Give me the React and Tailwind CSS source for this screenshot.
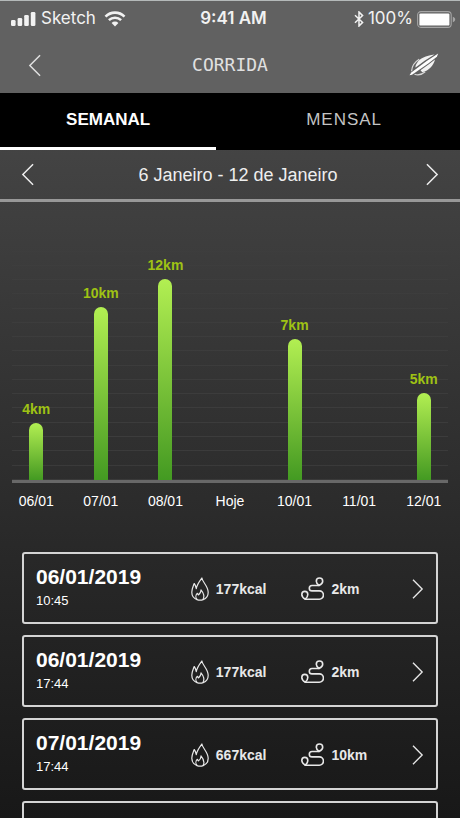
// src/App.jsx
import React from "react";

const days = [
  { label: "06/01", km: 4, height: 57 },
  { label: "07/01", km: 10, height: 173 },
  { label: "08/01", km: 12, height: 201 },
  { label: "Hoje", km: 0, height: 0 },
  { label: "10/01", km: 7, height: 141 },
  { label: "11/01", km: 0, height: 0 },
  { label: "12/01", km: 5, height: 87 },
];

const runs = [
  { id: 1, date: "06/01/2019", time: "10:45", kcal: 177, km: 2 },
  { id: 2, date: "06/01/2019", time: "17:44", kcal: 177, km: 2 },
  { id: 3, date: "07/01/2019", time: "17:44", kcal: 667, km: 10 },
];

// grid lines get fainter towards the top of the chart
const gridLines = Array.from({ length: 19 }, (_, i) => Math.min(0.06, i * 0.004));

const Chevron = ({ direction = "right", className }) => (
  <svg viewBox="0 0 14 24" fill="none" stroke="currentColor" className={className} aria-hidden="true">
    <path d={direction === "left" ? "M13 1 2 12l11 11" : "M1 1l11 11L1 23"} strokeWidth="1.6" />
  </svg>
);

const SignalIcon = () => (
  <svg viewBox="0 0 26 16" fill="currentColor" className="h-4 w-[26px]" aria-hidden="true">
    <rect x="0" y="9" width="4.6" height="6" rx="1.3" />
    <rect x="6.6" y="7" width="4.6" height="8" rx="1.3" />
    <rect x="13.2" y="4" width="4.6" height="11" rx="1.3" />
    <rect x="19.8" y="1" width="4.6" height="14" rx="1.3" />
  </svg>
);

const WifiIcon = () => (
  <svg viewBox="0 0 22 16" fill="none" stroke="currentColor" className="h-4 w-[22px]" aria-hidden="true">
    <path d="M1.5 5.6a13.4 13.4 0 0 1 19 0" strokeWidth="2.6" />
    <path d="M4.9 9.2a8.6 8.6 0 0 1 12.2 0" strokeWidth="2.5" />
    <path d="M11 15.6 7.6 12a4.8 4.8 0 0 1 6.8 0z" fill="currentColor" stroke="none" />
  </svg>
);

const BluetoothIcon = () => (
  <svg viewBox="0 0 10 16" fill="none" stroke="currentColor" className="h-4 w-2.5" aria-hidden="true">
    <path d="M1 4.2 8.6 11.4 5 15V1l3.6 3.6L1 11.8" strokeWidth="1.5" />
  </svg>
);

const BatteryIcon = () => (
  <svg viewBox="0 0 39 17" fill="none" className="h-[17px] w-[39px]" aria-hidden="true">
    <rect x="0.6" y="0.6" width="33.6" height="15.8" rx="3.4" stroke="#a5a5a5" strokeWidth="1.1" />
    <rect x="2.4" y="2.4" width="30" height="12.2" rx="1.2" fill="#fff" />
    <path d="M35.8 5.8c1.6.6 2.4 1.5 2.4 2.7s-.8 2.1-2.4 2.7z" fill="#a5a5a5" />
  </svg>
);

const LogoIcon = () => (
  <svg viewBox="0 0 30 24" fill="none" className="h-6 w-[30px]" aria-hidden="true">
    <path d="M.5 22.3 2.3 19.6 17.7 8 29.2.4 27.9 3.7 19.3 10.4 3 21.7z" fill="#fff" />
    <path d="M8 9.9C11 5.6 16.5 2.7 25.5 1.6L16 7.6 6.5 14.5c-.2-1.5.4-3 1.5-4.6z" fill="#f2f2f2" />
    <path d="M2.6 18.2C2.8 13.2 5.5 9.2 10.2 6.3" stroke="#d8d8d8" strokeWidth="1.2" />
    <path d="M11.5 17.3 19.5 11.6 26 6.4C24.6 12.6 20 17.4 13.3 19.2z" fill="#f2f2f2" />
    <path d="M5.5 21.3c3.3 1.2 7.3.5 10.7-2.5" stroke="#d8d8d8" strokeWidth="1.2" />
  </svg>
);

const FlameIcon = () => (
  <svg
    viewBox="0 0 18 24"
    fill="none"
    stroke="currentColor"
    strokeWidth="1.2"
    strokeLinejoin="round"
    className="h-6 w-[18px] shrink-0"
    aria-hidden="true"
  >
    <path d="M6 22.6C2.8 21.4.8 18.8.8 15.3c0-3.2 1.2-5.7 2.400-8.800 1 1.200 1.700 3 2.100 5.200C5.700 7.900 8.200 4.600 10.900 1c.2 3.7 6.300 8.200 6.300 14.200 0 3.700-2 6.300-5 7.400-2 .7-4.300.7-6.200 0z" />
    <path d="M6 22.5c-1.600-1.900-1.400-4.600.4-6.200.4.5.7 1 .9 1.600 1.900-1.300 2.800-2.800 2.700-5 1.900 2.300 3.900 6.600 2 9.600" />
  </svg>
);

const RouteIcon = () => (
  <svg
    viewBox="0 0 23 24"
    fill="none"
    stroke="currentColor"
    strokeWidth="1.6"
    strokeLinecap="round"
    strokeLinejoin="round"
    className="h-6 w-[23px] shrink-0"
    aria-hidden="true"
  >
    <path d="M18 8.400c-1.700-1.300-2.700-2.600-2.700-4.200a3.200 3.200 0 1 1 6.400 0c0 1.800-1.500 3.200-3.700 4.200z" />
    <path d="M4.200 22.200c-2-1.400-3.400-2.900-3.400-4.800a3 3 0 0 1 6 0c0 1.800-.8 3.200-2.600 4.800z" />
    <path d="M18 8.500h-7a2.700 2.700 0 0 0 0 5.400h7.300a4.100 4.100 0 0 1 0 8.300H4.200" />
  </svg>
);

const StatusBar = () => (
  <div className="grid h-9 grid-cols-[1fr_auto_1fr] items-center pr-1 pl-[11px] font-['Inter',sans-serif] text-[17px] text-[#f2f2f2]">
    <div className="flex items-center gap-1">
      <SignalIcon />
      <span>Sketch</span>
      <span className="pl-1">
        <WifiIcon />
      </span>
    </div>
    <span className="font-semibold">9:41 AM</span>
    <div className="flex items-center justify-end gap-1">
      <BluetoothIcon />
      <span>100%</span>
      <BatteryIcon />
    </div>
  </div>
);

const BarChart = () => (
  <section aria-label="Distância por dia" className="text-sm">
    <div className="relative">
      <div className="absolute inset-x-3 top-5 bottom-0 flex flex-col justify-between">
        {gridLines.map((opacity, i) => (
          <div key={i} className="h-px bg-white" style={{ opacity }} />
        ))}
      </div>
      <div className="relative grid h-[278px] grid-cols-7 items-end px-1">
        {days.map((day) => (
          <div key={day.label} className="flex flex-col items-center">
            {day.km > 0 && (
              <>
                <span className="mb-1.5 leading-4 font-bold text-[#9fc214]">{day.km}km</span>
                <div
                  className="w-3.5 rounded-t-full bg-linear-to-b from-[#b2ef52] to-[#439a22]"
                  style={{ height: day.height }}
                />
              </>
            )}
          </div>
        ))}
      </div>
    </div>
    <div className="mx-3 h-[3px] bg-[#686868]" />
    <div className="grid grid-cols-7 px-1 pt-2 text-center leading-5 text-white">
      {days.map((day) => (
        <span key={day.label}>{day.label}</span>
      ))}
    </div>
  </section>
);

const cardClass = "h-18 w-full rounded-[3px] border-2 border-[#d4d4d4]";

const RunCard = ({ run }) => (
  <li>
    <button
      type="button"
      className={`${cardClass} grid grid-cols-[7fr_5fr_5fr_auto] items-center px-3 pt-0.5 text-left text-[#e8e8e8]`}
    >
      <div className="text-white">
        <div className="text-[21px] leading-6 font-bold">{run.date}</div>
        <div className="text-[13px] leading-6">{run.time}</div>
      </div>
      <div className="flex items-center gap-[7px] text-sm font-bold">
        <FlameIcon />
        {run.kcal}kcal
      </div>
      <div className="flex items-center gap-[7px] text-sm font-bold">
        <RouteIcon />
        {run.km}km
      </div>
      <Chevron className="h-5 w-3" />
    </button>
  </li>
);

const App = () => {
  return (
    <div className="flex h-screen flex-col overflow-hidden bg-linear-to-b from-[#4e4e4e] to-[#181818] font-['Liberation_Sans',Arial,sans-serif]">
      <header className="shrink-0 border-t border-[#b4b9b9] bg-[#616161]">
        <StatusBar />
        <div className="grid h-14 grid-cols-[1fr_auto_1fr] items-center px-[21px]">
          <button type="button" aria-label="Voltar" className="justify-self-start pl-[7px] text-[#e0e0e0]">
            <Chevron direction="left" className="h-[23px] w-[13px]" />
          </button>
          <h1 className="font-['DejaVu_Sans_Mono',monospace] text-lg text-[#e0e0e0]">CORRIDA</h1>
          <div className="justify-self-end">
            <LogoIcon />
          </div>
        </div>
      </header>

      <nav className="flex h-[57px] shrink-0 gap-3 bg-black text-[17px]">
        <button type="button" className="w-[47%] border-b-3 border-white font-bold text-white">
          SEMANAL
        </button>
        <button type="button" className="flex-1 border-b-3 border-transparent tracking-[1px] text-[#c4c4c4]">
          MENSAL
        </button>
      </nav>

      <div className="flex h-[52px] shrink-0 items-center justify-between border-b-3 border-[#989898] px-[21px] text-[#eeeeee]">
        <button type="button" aria-label="Semana anterior">
          <Chevron direction="left" className="h-[23px] w-[13px]" />
        </button>
        <span className="pl-4 text-lg">6 Janeiro - 12 de Janeiro</span>
        <button type="button" aria-label="Próxima semana">
          <Chevron className="h-[23px] w-[13px]" />
        </button>
      </div>

      <BarChart />

      <ul className="mt-[41px] flex flex-col gap-[11px] px-[22px]">
        {runs.map((run) => (
          <RunCard key={run.id} run={run} />
        ))}
        {/* next card, still empty */}
        <li className={cardClass} />
      </ul>
    </div>
  );
};

export default App;
